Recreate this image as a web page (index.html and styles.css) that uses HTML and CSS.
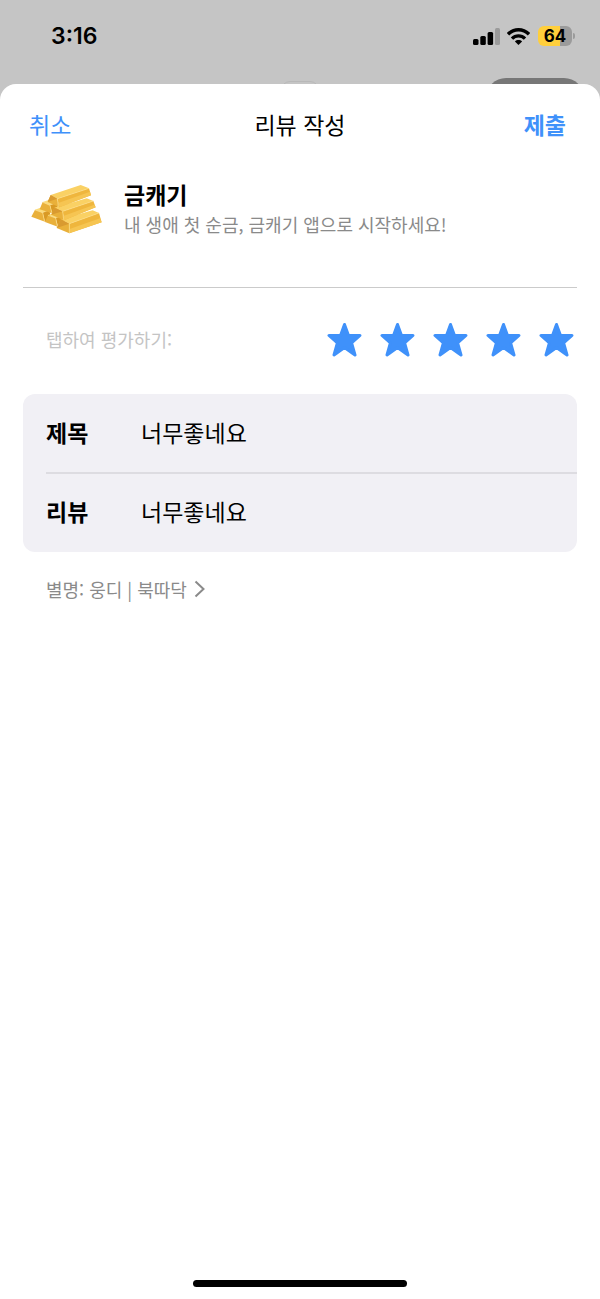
FILE: index.html
```html
<!DOCTYPE html>
<html lang="ko">

<head>
    <meta charset="UTF-8">
    <meta name="viewport" content="width=device-width, initial-scale=1.0">
    <title>리뷰 작성</title>
    <link rel="stylesheet" href="styles.css">
</head>

<body>

    <div class="status-bar">
        <span class="time">3:16</span>
        <div class="status-icons">
            <svg class="signal" width="27" height="17" viewBox="0 0 27 17">
                <rect x="0" y="11" width="5.500" height="6" rx="1.500" />
                <rect x="7.300" y="8" width="5.500" height="9" rx="1.500" />
                <rect x="14.600" y="4" width="5.500" height="13" rx="1.500" />
                <rect x="22" y="0" width="5" height="17" rx="1.500" fill="#9b9b9b" />
            </svg>
            <svg class="wifi" width="23" height="17" viewBox="0 0 23 17">
                <g fill="none" stroke="#000" stroke-width="3.400">
                    <path d="M1 6.200C7 .2 16 .2 22 6.200" />
                    <path d="M5 10.600c3.700-3.600 9.300-3.600 13 0" />
                </g>
                <path d="M11.500 17l-3.600-3.500c2-1.900 5.200-1.900 7.200 0z" />
            </svg>
            <span class="battery">64</span>
        </div>
        <span class="behind behind-icon"></span>
        <span class="behind behind-button"></span>
    </div>

    <form class="sheet">
        <header class="sheet-header">
            <button type="button" class="cancel">취소</button>
            <h1>리뷰 작성</h1>
            <button type="submit" class="submit">제출</button>
        </header>

        <!-- App info -->
        <section class="app-info">
            <svg class="app-icon" width="71" height="50" viewBox="33 41 213 150">
                <!-- bottom row -->
                <path d="M45 118l20-7 22 10-19 6z" fill="#fbdc7c" />
                <path d="M68 127l20-7 6 26-19 8z" fill="#d99a25" />
                <path d="M45 118l23 9 7 27-41-15z" fill="#e9b03a" />
                <path d="M84 134l22-7 22 10-20 6z" fill="#fbdc7c" />
                <path d="M107 143l20-6 7 22-20 10z" fill="#d99a25" />
                <path d="M84 134l23 9 6 26-38-14z" fill="#e9b03a" />
                <path d="M122 147l96-27 19 8-89 32z" fill="#fad164" />
                <path d="M148 160l89-32 8 28-97 33z" fill="#efb63d" />
                <path d="M149 176l91-32 5 12-97 33z" fill="#f6c552" />
                <path d="M122 147l26 13v29l-38-16z" fill="#e9b03a" />
                <path d="M122 147l26 13-38 13z" fill="#d99a30" />
                <!-- middle row -->
                <path d="M68 95l20-7 22 10-20 7z" fill="#fbdc7c" />
                <path d="M90 105l20-7 6 22-20 8z" fill="#d99a25" />
                <path d="M68 95l22 10 6 24-37-12z" fill="#e9b03a" />
                <path d="M103 112l97-28 20 8-92 31z" fill="#fad164" />
                <path d="M128 123l92-31 7 19-95 39z" fill="#efb63d" />
                <path d="M130 137l93-34 4 8-95 39z" fill="#f6c552" />
                <path d="M103 112l25 11 4 27-38-17z" fill="#e9b03a" />
                <path d="M103 112l25 11-34 10z" fill="#d99a30" />
                <!-- top bar -->
                <path d="M92 74l90-30 25 10-95 31z" fill="#fad164" />
                <path d="M112 85l95-31 6 21-95 36z" fill="#efb63d" />
                <path d="M115 98l95-34 3 11-95 36z" fill="#f6c552" />
                <path d="M92 74l20 11 6 26-35-16z" fill="#e9b03a" />
                <path d="M92 74l20 11-29 10z" fill="#d99a30" />
                <g fill="none" stroke="#fde08a" stroke-width="2">
                    <path d="M115 110l-3-25 95-31" />
                    <path d="M131 149l-3-26 92-31" />
                    <path d="M148 188v-28l89-32" />
                    <path d="M68 96l22 9 5 22M45 119l23 8 5 25M84 135l23 8 5 25" />
                </g>
            </svg>
            <div class="app-text">
                <h2>금캐기</h2>
                <p>내 생애 첫 순금, 금캐기 앱으로 시작하세요!</p>
            </div>
        </section>

        <!-- Star rating -->
        <div class="rating" role="radiogroup" aria-labelledby="ratingLabel">
            <span class="rating-label" id="ratingLabel">탭하여 평가하기:</span>
            <div class="stars">
                <label class="star">
                    <input type="radio" name="rating" value="1" aria-label="1">
                    <svg width="35" height="35" viewBox="0 0 35 35"><use href="#star" /></svg>
                </label>
                <label class="star">
                    <input type="radio" name="rating" value="2" aria-label="2">
                    <svg width="35" height="35" viewBox="0 0 35 35"><use href="#star" /></svg>
                </label>
                <label class="star">
                    <input type="radio" name="rating" value="3" aria-label="3">
                    <svg width="35" height="35" viewBox="0 0 35 35"><use href="#star" /></svg>
                </label>
                <label class="star">
                    <input type="radio" name="rating" value="4" aria-label="4">
                    <svg width="35" height="35" viewBox="0 0 35 35"><use href="#star" /></svg>
                </label>
                <label class="star">
                    <input type="radio" name="rating" value="5" aria-label="5" checked>
                    <svg width="35" height="35" viewBox="0 0 35 35">
                        <path id="star" d="M17.500 2.500L21.500 13.500H33L24.600 21 28 33l-10.500-7.500L7 33l3.400-12L2 13.500h11.500z" />
                    </svg>
                </label>
            </div>
        </div>

        <div class="fields">
            <div class="field">
                <label for="title">제목</label>
                <input type="text" id="title" name="title" value="너무좋네요">
            </div>
            <div class="field">
                <label for="review">리뷰</label>
                <input type="text" id="review" name="review" value="너무좋네요">
            </div>
        </div>

        <a href="#" class="nickname">별명: 웅디 | 북따닥
            <svg width="11" height="18" viewBox="0 0 11 18">
                <path d="M1.500 1.500L9.500 9l-8 7.500" />
            </svg>
        </a>

        <div class="home-bar"></div>
    </form>

</body>

</html>
```

FILE: styles.css
```css
* {
    box-sizing: border-box;
}

body {
    display: flex;
    flex-direction: column;
    min-height: 100vh;
    margin: 0;
    background-color: #c5c5c5;
    color: #000;
    font-family: "Noto Sans CJK KR", sans-serif;
    font-size: 23px;
    line-height: 32px;
}

h1,
h2,
p {
    margin: 0;
}

button,
input {
    padding: 0;
    border: none;
    background: none;
    color: inherit;
    font: inherit;
}

button {
    cursor: pointer;
}

/* Status bar */
.status-bar {
    position: relative;
    display: flex;
    justify-content: space-between;
    height: 84px;
    padding: 20px 25px 0 51px;
    overflow: hidden;
    font-family: Inter, sans-serif;
    font-weight: 600;
}

.status-icons {
    display: flex;
    align-items: center;
    gap: 7px;
    height: 32px;
}

.battery {
    position: relative;
    width: 34px;
    height: 20px;
    margin-left: 1px;
    margin-right: 3px;
    border-radius: 6px;
    background: linear-gradient(to right, #ffcf3c 64%, #9b9b9b 64%);
    font-size: 17px;
    font-weight: 700;
    line-height: 20px;
    text-align: center;
}

.battery::after {
    content: "";
    position: absolute;
    top: 7px;
    right: -3px;
    width: 2px;
    height: 6px;
    border-radius: 0 2px 2px 0;
    background-color: #9b9b9b;
}

/* Tops of the page that the sheet covers */
.behind {
    position: absolute;
    border-radius: 20px;
}

.behind-icon {
    top: 81px;
    left: calc(50% - 19px);
    width: 38px;
    height: 38px;
    border: 1px solid #b8b8b8;
    border-radius: 9px;
}

.behind-button {
    top: 78px;
    right: 16px;
    width: 98px;
    height: 40px;
    background-color: #777;
}

/* Sheet */
.sheet {
    display: flex;
    flex: 1;
    flex-direction: column;
    padding: 0 23px 12px;
    border-radius: 16px 16px 0 0;
    background-color: #fff;
}

.sheet-header {
    display: grid;
    grid-template-columns: 1fr auto 1fr;
    align-items: center;
    height: 80px;
    padding: 0 6px;
}

.sheet-header h1 {
    font-size: 23px;
    font-weight: 400;
}

.cancel,
.submit {
    color: #3f91fa;
}

.cancel {
    justify-self: start;
}

.submit {
    justify-self: end;
    padding-right: 5px;
    font-weight: 700;
}

.app-info {
    display: flex;
    gap: 22px;
    height: 124px;
    padding: 14px 8px 0;
    border-bottom: 1px solid #cbcbcb;
}

.app-icon {
    margin-top: 6px;
}

.app-text h2 {
    font-size: 23px;
    font-weight: 700;
    line-height: 32px;
}

.app-text p {
    color: #8a8a8a;
    font-size: 18px;
    line-height: 28px;
}

.rating {
    display: flex;
    align-items: center;
    justify-content: space-between;
    height: 102px;
    margin-bottom: 4px;
    padding: 0 3px 0 23px;
}

.rating-label {
    color: #c4c4c4;
    font-size: 18px;
}

.stars {
    display: flex;
    gap: 18px;
}

.star {
    display: grid;
    cursor: pointer;
}

.star input,
.star svg {
    grid-area: 1 / 1;
}

.star input {
    width: 35px;
    height: 35px;
    margin: 0;
    opacity: 0;
}

.star svg {
    fill: #3f91fa;
    stroke: #3f91fa;
    stroke-width: 3;
    stroke-linejoin: round;
}

.fields {
    padding-bottom: 2px;
    padding-left: 23px;
    border-radius: 12px;
    background-color: #f1f0f5;
}

.field {
    display: flex;
    align-items: center;
    height: 78px;
    padding-bottom: 2px;
}

.field + .field {
    border-top: 2px solid #dddce1;
}

.field label {
    width: 95px;
    font-weight: 700;
}

.field input {
    flex: 1;
    min-width: 0;
    outline: none;
}

.nickname {
    display: flex;
    align-items: center;
    gap: 7px;
    margin-top: 21px;
    padding-left: 23px;
    color: #8a8a8a;
    font-size: 18px;
    text-decoration: none;
}

.nickname svg {
    fill: none;
    stroke: #8a8a8a;
    stroke-width: 2;
}

.home-bar {
    align-self: center;
    width: 214px;
    height: 7px;
    margin-top: auto;
    border-radius: 4px;
    background-color: #000;
}
```
